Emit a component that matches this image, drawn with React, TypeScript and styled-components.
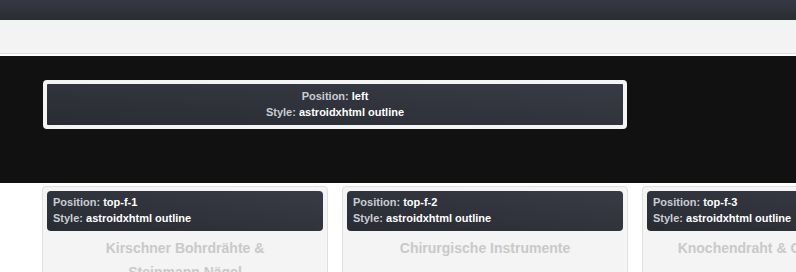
import React from 'react';
import styled, { createGlobalStyle } from 'styled-components';

const GlobalStyle = createGlobalStyle`
  html, body {
    margin: 0;
    padding: 0;
    background: #fff;
    overflow: hidden;
    font-family: 'Liberation Sans', Arial, sans-serif;
  }
`;

const TopBar = styled.div`
  height: 20px;
  background: linear-gradient(to bottom, #363944, #2a2c33);
`;

const SubBar = styled.div`
  height: 33px;
  background: #f3f3f3;
  border-bottom: 1px solid #dcdcdc;
  margin-bottom: 2px;
`;

const Hero = styled.section`
  height: 127px;
  background: #111111;
  padding: 24px 0 0 43px;
  box-sizing: border-box;
`;

const OutlineBox = styled.div`
  width: 584px;
  box-sizing: border-box;
  border: 4px solid #f4f4f4;
  border-radius: 4px;
  background: #f4f4f4;
`;

const ModuleInfo = styled.div<{ $centered?: boolean; $radius?: number }>`
  background: linear-gradient(to top right, #2a2c33, #383b45);
  border-radius: ${(p) => p.$radius ?? 4}px;
  padding: ${(p) => (p.$centered ? '4px 6px 5px' : '3px 6px 5px')};
  text-align: ${(p) => (p.$centered ? 'center' : 'left')};
  font-size: 11px;
  font-weight: bold;
  line-height: 16px;
  color: #fff;
  white-space: nowrap;
`;

const Label = styled.span`
  color: #c9cdd6;
`;

const CardRow = styled.div`
  display: flex;
  gap: 14px;
  margin-top: 3px;
  padding-left: 42px;
`;

const Card = styled.div`
  flex: 0 0 286px;
  box-sizing: border-box;
  height: 200px;
  background: #f4f4f4;
  border: 1px solid #e0e0e0;
  border-radius: 4px;
  padding: 4px;
`;

const CardTitle = styled.h3`
  margin: 5px 0 0;
  padding: 0 24px;
  text-align: center;
  font-size: 14px;
  font-weight: bold;
  line-height: 24px;
  color: #c9c9c9;
`;

const modules = [
  { position: 'top-f-1', title: 'Kirschner Bohrdrähte & Steinmann Nägel' },
  { position: 'top-f-2', title: 'Chirurgische Instrumente' },
  { position: 'top-f-3', title: 'Knochendraht & Cerclagedrähte' },
];

export default function App() {
  return (
    <>
      <GlobalStyle />
      <TopBar />
      <SubBar />
      <Hero>
        <OutlineBox>
          <ModuleInfo $centered $radius={1}>
            <Label>Position:</Label> left
            <br />
            <Label>Style:</Label> astroidxhtml outline
          </ModuleInfo>
        </OutlineBox>
      </Hero>
      <CardRow>
        {modules.map((m) => (
          <Card key={m.position}>
            <ModuleInfo>
              <Label>Position:</Label> {m.position}
              <br />
              <Label>Style:</Label> astroidxhtml outline
            </ModuleInfo>
            <CardTitle>{m.title}</CardTitle>
          </Card>
        ))}
      </CardRow>
    </>
  );
}
